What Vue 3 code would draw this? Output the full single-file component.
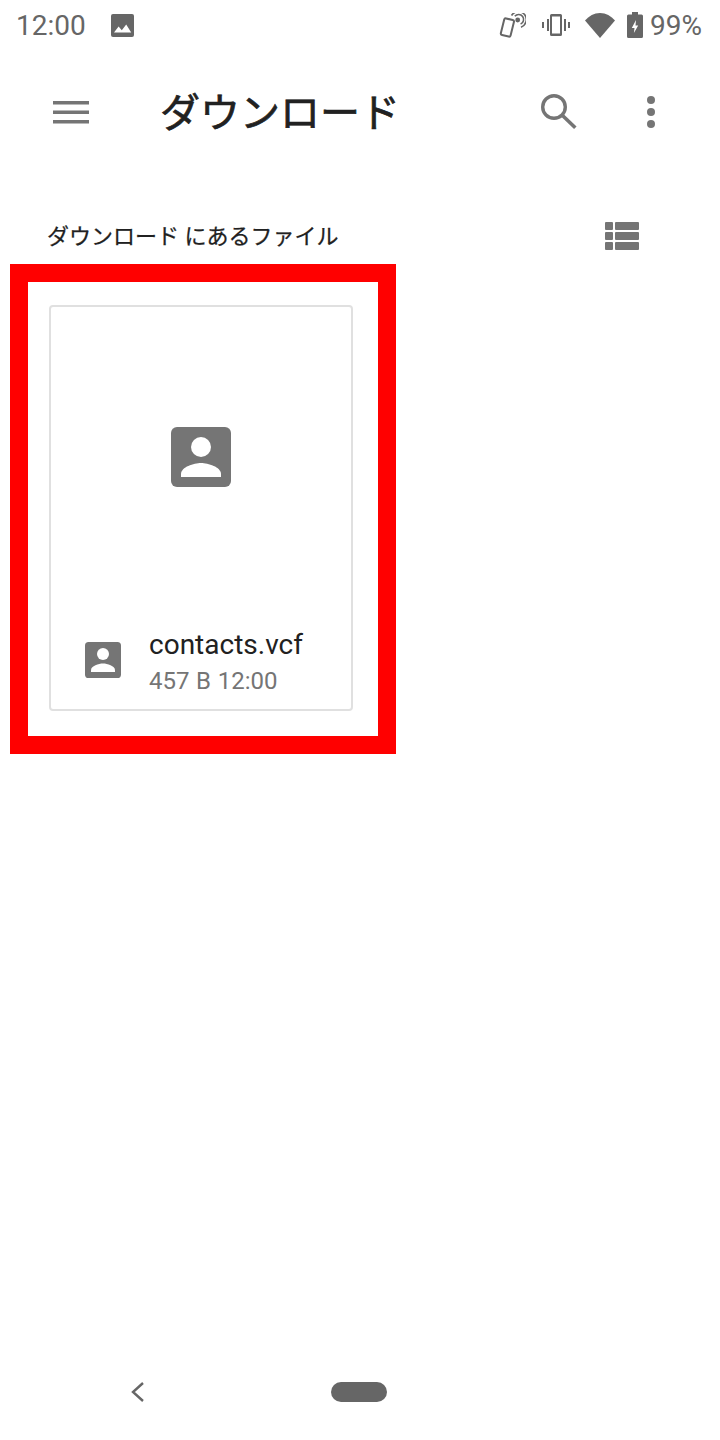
<script setup>
const file = { name: 'contacts.vcf', size: '457 B', time: '12:00' }
</script>

<template>
  <div class="page">
    <div class="status">
      <span class="clock">12:00</span>
      <svg class="ic-image" viewBox="0 0 23 23">
        <rect width="23" height="23" rx="2" fill="#666" />
        <path d="M3 18.500l4.600-6 3.200 3.800 4.400-5.800 5 8z" fill="#fff" />
      </svg>
      <div class="status-right">
        <svg class="ic-nfc" viewBox="0 0 27 25" fill="none" stroke="#666">
          <rect x="3.400" y="6" width="10" height="17" rx="1.600" transform="rotate(14 8.400 14.500)" stroke-width="2" />
          <circle cx="18.700" cy="7" r="2.400" fill="#666" stroke="none" />
          <path d="M15.800 3.300a5 5 0 1 1 5.800 7.800" stroke-width="1.600" />
          <path d="M12.500 2.500a8 8 0 1 1 9.500 11.700" stroke-width="1.600" />
        </svg>
        <svg class="ic-vibrate" viewBox="0 0 28 22" fill="#666">
          <path d="M9.500 0h9a1.500 1.500 0 0 1 1.500 1.500v19a1.500 1.500 0 0 1-1.500 1.500h-9A1.500 1.500 0 0 1 8 20.500v-19A1.500 1.500 0 0 1 9.500 0zm.5 2.500v17h8v-17z" />
          <rect x="5" y="5" width="2" height="12" />
          <rect x="0" y="8" width="2" height="6" />
          <rect x="22" y="5" width="2" height="12" />
          <rect x="26" y="8" width="2" height="6" />
        </svg>
        <svg class="ic-wifi" viewBox="0 0 30 25">
          <path d="M15 25L0 7.500C4 3 9 0 15 0s11 3 15 7.500z" fill="#666" />
        </svg>
        <svg class="ic-battery" viewBox="0 0 16 26">
          <path d="M5 0h6v2.500h3.500A1.500 1.500 0 0 1 16 4v20.500a1.500 1.500 0 0 1-1.500 1.500h-13A1.500 1.500 0 0 1 0 24.500V4a1.500 1.500 0 0 1 1.500-1.500H5z" fill="#666" />
          <path d="M9 8l-4.200 8h2.700l-.6 5 4.300-7.500H8.500z" fill="#fff" />
        </svg>
        <span class="percent">99%</span>
      </div>
    </div>

    <header class="toolbar">
      <svg class="ic-menu" viewBox="0 0 36 24" fill="#757575">
        <rect y="1" width="36" height="3.500" />
        <rect y="10.500" width="36" height="3.500" />
        <rect y="20" width="36" height="3.500" />
      </svg>
      <h1>ダウンロード</h1>
      <svg class="ic-search" viewBox="0 0 36 36" fill="none" stroke="#757575">
        <circle cx="13" cy="13" r="11.300" stroke-width="3.400" />
        <path d="M21 21l13.300 12.800" stroke-width="3.600" />
      </svg>
      <svg class="ic-more" viewBox="0 0 8 32" fill="#757575">
        <circle cx="4" cy="4" r="4" />
        <circle cx="4" cy="16" r="4" />
        <circle cx="4" cy="28" r="4" />
      </svg>
    </header>

    <div class="section-head">
      <span>ダウンロード にあるファイル</span>
      <svg class="ic-list" viewBox="0 0 34 28" fill="#757575">
        <rect y="0" width="8" height="8" rx="1" />
        <rect y="10" width="8" height="8" rx="1" />
        <rect y="20" width="8" height="8" rx="1" />
        <rect x="10" y="0" width="24" height="8" rx="1" />
        <rect x="10" y="10" width="24" height="8" rx="1" />
        <rect x="10" y="20" width="24" height="8" rx="1" />
      </svg>
    </div>

    <div class="highlight">
      <div class="card">
        <div class="thumb">
          <svg class="ic-contact-lg" viewBox="0 0 60 60">
            <rect width="60" height="60" rx="6" fill="#757575" />
            <circle cx="30" cy="20" r="10" fill="#fff" />
            <path d="M10 50v-3c0-7 13-11 20-11s20 4 20 11v3z" fill="#fff" />
          </svg>
        </div>
        <div class="meta">
          <svg class="ic-contact-sm" viewBox="0 0 60 60">
            <rect width="60" height="60" rx="6" fill="#757575" />
            <circle cx="30" cy="20" r="10" fill="#fff" />
            <path d="M10 50v-3c0-7 13-11 20-11s20 4 20 11v3z" fill="#fff" />
          </svg>
          <div class="meta-text">
            <div class="name">{{ file.name }}</div>
            <div class="details">{{ file.size }} {{ file.time }}</div>
          </div>
        </div>
      </div>
    </div>

    <nav class="nav">
      <svg class="ic-back" viewBox="0 0 13 20" fill="none" stroke="#666" stroke-width="2.400">
        <path d="M12 1L2 10l10 9" />
      </svg>
      <div class="pill"></div>
    </nav>
  </div>
</template>

<style>
body {
  margin: 0;
  background: #fff;
}
</style>

<style scoped>
.page {
  width: 720px;
  height: 1440px;
  display: flex;
  flex-direction: column;
  background: #fff;
  font-family: Roboto, "Noto Sans CJK JP", sans-serif;
  overflow: hidden;
}

svg {
  display: block;
  flex: none;
}

.status {
  height: 50px;
  display: flex;
  align-items: center;
  padding: 0 18px 0 16px;
  color: #666;
}

.clock {
  font-size: 28px;
  width: 95px;
}

.ic-image {
  width: 23px;
  height: 23px;
}

.status-right {
  margin-left: auto;
  display: flex;
  align-items: center;
}

.ic-nfc {
  width: 27px;
  height: 25px;
  margin-right: 16px;
}

.ic-vibrate {
  width: 28px;
  height: 22px;
  margin-right: 15px;
}

.ic-wifi {
  width: 30px;
  height: 25px;
  margin-right: 12px;
}

.ic-battery {
  width: 16px;
  height: 26px;
  margin-right: 7px;
}

.percent {
  font-size: 28px;
}

.toolbar {
  height: 124px;
  display: flex;
  align-items: center;
  padding-left: 53px;
}

.ic-menu {
  width: 36px;
  height: 24px;
}

.toolbar h1 {
  margin: 0 0 4px 71px;
  font-size: 40px;
  font-weight: 400;
  -webkit-text-stroke: 0.7px #212121;
  color: #212121;
  width: 381px;
}

.ic-search {
  width: 36px;
  height: 36px;
}

.ic-more {
  width: 8px;
  height: 32px;
  margin-left: 70px;
}

.section-head {
  height: 90px;
  box-sizing: border-box;
  padding: 0 81px 12px 47px;
  display: flex;
  align-items: flex-end;
  justify-content: space-between;
  font-size: 22px;
  color: #212121;
}

.section-head span {
  line-height: 30px;
  -webkit-text-stroke: 0.25px #212121;
}

.ic-list {
  width: 34px;
  height: 28px;
  margin-bottom: 2px;
}

.highlight {
  width: 386px;
  height: 490px;
  box-sizing: border-box;
  margin-left: 10px;
  border: 18px solid #ff0000;
  padding: 23px 25px 25px 21px;
}

.card {
  height: 100%;
  box-sizing: border-box;
  border: 2px solid #e0e0e0;
  border-radius: 4px;
  display: flex;
  flex-direction: column;
}

.thumb {
  height: 300px;
  display: flex;
  align-items: center;
  justify-content: center;
}

.meta {
  display: flex;
  align-items: flex-start;
  padding-left: 34px;
  margin-top: 20px;
}

.ic-contact-sm {
  width: 36px;
  height: 36px;
  margin-top: 15px;
}

.meta-text {
  margin-left: 28px;
}

.name {
  font-size: 28px;
  line-height: 36px;
  color: #212121;
}

.details {
  font-size: 24px;
  line-height: 36px;
  word-spacing: 0.7px;
  color: #757575;
}

.ic-contact-lg {
  width: 60px;
  height: 60px;
}

.nav {
  margin-top: auto;
  height: 96px;
  box-sizing: border-box;
  padding: 0 0 38px 131px;
  display: flex;
  align-items: flex-end;
}

.ic-back {
  width: 13px;
  height: 20px;
}

.pill {
  width: 56px;
  height: 20px;
  margin-left: 187px;
  border-radius: 10px;
  background: #666;
}
</style>
